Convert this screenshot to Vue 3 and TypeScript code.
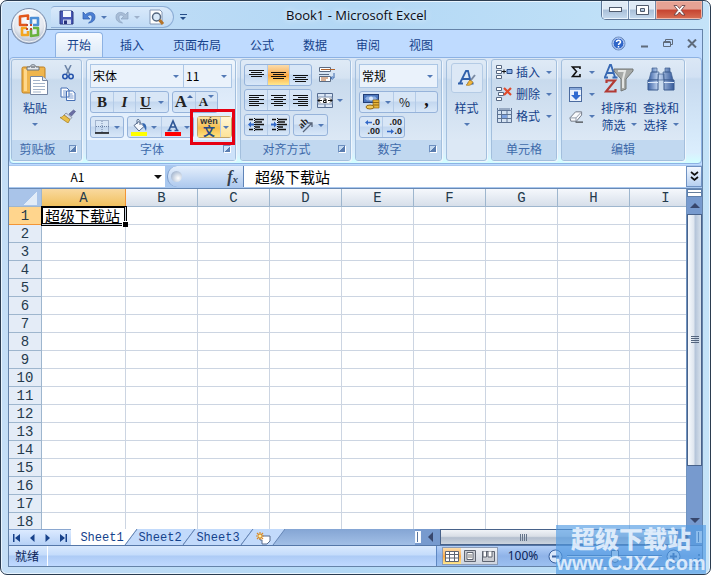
<script setup lang="ts">
import { ref } from 'vue'

interface SheetRow {
  index: number
  cells: string[]
}

const tabs = ['开始', '插入', '页面布局', '公式', '数据', '审阅', '视图']
const activeTab = ref('开始')
const columns = ['A', 'B', 'C', 'D', 'E', 'F', 'G', 'H', 'I']
const rows: SheetRow[] = Array.from({ length: 18 }, (_, r) => ({
  index: r + 1,
  cells: columns.map((_, c) => (r === 0 && c === 0 ? '超级下载站' : '')),
}))
const sheets = ['Sheet1', 'Sheet2', 'Sheet3']
const activeSheet = ref('Sheet1')
const cellName = ref('A1')
const formula = ref('超级下载站')
const zoom = ref(100)
</script>

<template>
  <div class="window">
    <header class="titlebar">
      <button class="office" aria-label="Office">
        <svg width="38" height="38" viewBox="0 0 38 38">
          <defs>
            <radialGradient id="orb" cx=".5" cy=".3" r=".75">
              <stop offset="0" stop-color="#fff" />
              <stop offset=".6" stop-color="#e3e7ee" />
              <stop offset="1" stop-color="#9aa9bf" />
            </radialGradient>
          </defs>
          <circle cx="19" cy="19" r="17.5" fill="url(#orb)" stroke="#7589a8" />
          <circle cx="19" cy="19" r="16" fill="none" stroke="#fff" stroke-opacity=".8" />
          <g fill="none" stroke-width="2.6" stroke-linejoin="round">
            <path d="M17 18H10V9.500L18 8.500V13" stroke="#e2571b" />
            <path d="M21 17v-6h7v7h-5" stroke="#4d8fd6" />
            <path d="M17 21h-5v7h6v-4" stroke="#f3a51f" />
            <path d="M21 22v7l7-1v-7h-5" stroke="#69b23d" />
          </g>
          <path d="M16 17h2v2h-2zM20 17h2v2h-2zM16 21h2v2h-2zM20 21h2v2h-2z" fill="#c34a2c" />
        </svg>
      </button>
      <div class="quick">
        <button aria-label="保存">
          <svg width="15" height="15" viewBox="0 0 15 15">
            <path d="M1 1h12l1 1v12H1z" fill="#4756b5" stroke="#2b367f" />
            <path d="M4 1h8v6H4z" fill="#f4f7ff" />
            <path d="M4 9.500h8V14H4z" fill="#cdd6f2" />
            <path d="M5 10.500h3V14H5z" fill="#27307a" />
          </svg>
        </button>
        <button aria-label="撤消">
          <svg width="14" height="14" viewBox="0 0 14 14">
            <path d="M1 2v7h7L5.500 6.500C8 4 10 5 10 7.500S9 11 6.500 13C11 12.500 13 10 13 7 13 2 7.500 1 3.500 4.500z" fill="#4c7fd4" stroke="#2d5cae" stroke-width=".7" />
          </svg>
        </button>
        <i class="caret wide"></i>
        <button aria-label="恢复" class="redo">
          <svg width="14" height="14" viewBox="0 0 14 14">
            <path d="M13 2v7H6l2.500-2.500C6 4 4 5 4 7.500S5 11 7.500 13C3 12.500 1 10 1 7 1 2 6.500 1 10.500 4.500z" fill="#a9bdd6" stroke="#8ba3c2" stroke-width=".7" />
          </svg>
        </button>
        <i class="caret pale wide"></i>
        <button aria-label="打印预览">
          <svg width="17" height="17" viewBox="0 0 17 17">
            <path d="M3 1h9l2 2v12H2V1z" fill="#fff" stroke="#8296b4" />
            <circle cx="8.500" cy="8" r="4" fill="#d9e9f8" stroke="#55677f" stroke-width="1.500" />
            <path d="M11.500 11l3.500 4" stroke="#b5742a" stroke-width="3" />
          </svg>
        </button>
      </div>
      <button class="customize" aria-label="自定义快速访问工具栏"><i class="caret"></i></button>
      <h1>Book1 - Microsoft Excel</h1>
      <div class="controls">
        <button aria-label="最小化">
          <svg width="13" height="6" viewBox="0 0 13 6"><rect x=".5" y=".5" width="12" height="4" fill="#fff" stroke="#505b6d" /></svg>
        </button>
        <button aria-label="最大化">
          <svg width="13" height="11" viewBox="0 0 13 11"><path d="M.5.500h12v9H.5zM4.500 3.500h4v3h-4z" fill="#fff" fill-rule="evenodd" stroke="#505b6d" /></svg>
        </button>
        <button class="close" aria-label="关闭">
          <svg width="13" height="11" viewBox="0 0 13 11"><path d="M1 .5h3l2.500 3 2.500-3h3L8.200 5.300 12 10H9L6.500 7 4 10H1l3.800-4.700z" fill="#fff" stroke="#5b3a40" stroke-width=".8" /></svg>
        </button>
      </div>
    </header>

    <main class="client">
      <nav class="tabs">
        <button v-for="t in tabs" :key="t" :class="{ active: t === activeTab }" @click="activeTab = t">{{ t }}</button>
        <div class="doc-controls">
          <button aria-label="帮助">
            <svg width="15" height="15" viewBox="0 0 15 15">
              <circle cx="7.500" cy="7.500" r="6.500" fill="#2f66c9" stroke="#6d8dbd" />
              <circle cx="7.500" cy="7.500" r="5.500" fill="none" stroke="#dfebff" />
              <path d="M5.500 6c0-2.500 4-2.500 4 0 0 1.300-2 1.300-2 3M7.500 10v1.500" fill="none" stroke="#fff" stroke-width="1.500" />
            </svg>
          </button>
          <button aria-label="最小化工作簿"><svg width="9" height="9" viewBox="0 0 9 9"><path d="M1 7.500h7" stroke="#5f6b7b" stroke-width="2" /></svg></button>
          <button aria-label="还原工作簿"><svg width="10" height="9" viewBox="0 0 10 9"><path d="M2.500 2V.5h7v5H8M.5 3h7v4.500h-7zM.5 3h7" fill="none" stroke="#5f6b7b" /><path d="M1 3h6" stroke="#5f6b7b" stroke-width="2" /></svg></button>
          <button aria-label="关闭工作簿"><svg width="10" height="9" viewBox="0 0 10 9"><path d="M1 .5l8 8M9 .5l-8 8" stroke="#5f6b7b" stroke-width="2" /></svg></button>
        </div>
      </nav>

      <div class="ribbon">
        <section class="group clipboard">
          <div class="body">
            <button class="large">
              <svg width="28" height="32" viewBox="0 0 28 32">
                <rect x="1" y="3" width="23" height="26" rx="1.500" fill="#efb54d" stroke="#bd7e20" />
                <path d="M3 5h3v22H3z" fill="#ffd78a" />
                <path d="M6 6V3h3c0-3 6-3 6 0h3v3z" fill="#e5e9ed" stroke="#69737f" />
                <path d="M10 3h4" stroke="#38414c" />
                <path d="M9.500 12.500h12l5 4v14h-17z" fill="#fff" stroke="#7586a2" />
                <path d="M21.500 12.500v4h5" fill="#dce6f3" stroke="#7586a2" />
                <path d="M12 16.500h7M12 19.500h12M12 22.500h12M12 25.500h12M12 28h8" stroke="#a3b3c9" />
              </svg>
              <span>粘贴</span><i class="caret"></i>
            </button>
            <div class="stack icons">
              <button aria-label="剪切">
                <svg width="14" height="15" viewBox="0 0 14 15"><path d="M4 0l4.500 9M10 0L5.500 9" stroke="#6f86a8" stroke-width="1.600" /><circle cx="4" cy="11.500" r="2.200" fill="none" stroke="#2855ac" stroke-width="1.600" /><circle cx="10" cy="11.500" r="2.200" fill="none" stroke="#2855ac" stroke-width="1.600" /></svg>
              </button>
              <button aria-label="复制">
                <svg width="16" height="14" viewBox="0 0 16 14"><path d="M1 1h6l2 2v7H1zM6.500 4h6L15 6v7.500H6.500z" fill="#fff" stroke="#456fb5" /><path d="M3 4h3M3 6h3M3 8h3M8.500 7h4M8.500 9h5M8.500 11h5" stroke="#7698cf" /></svg>
              </button>
              <button aria-label="格式刷">
                <svg width="16" height="14" viewBox="0 0 16 14"><path d="M9 5l4.500-4 2 1.500L11.500 7z" fill="#6a6fa5" stroke="#4c4f80" stroke-width=".6" /><path d="M6 4l6 4.500-2 2L4 6z" fill="#d6dbe6" stroke="#717c92" stroke-width=".7" /><path d="M4 6l6 4.500L8 14 0 8.500C2 8.500 3 7 4 6z" fill="#eabf48" stroke="#a47b1f" stroke-width=".7" /></svg>
              </button>
            </div>
          </div>
          <footer>剪贴板<i class="launcher"></i></footer>
        </section>

        <section class="group font">
          <div class="body lines">
            <div class="line combos">
              <label class="combo grow"><select aria-label="字体"><option>宋体</option></select><i class="caret"></i></label>
              <label class="combo size"><select aria-label="字号"><option>11</option></select><i class="caret"></i></label>
            </div>
            <div class="line">
              <div class="set">
                <button class="glyph"><b>B</b></button>
                <button class="glyph"><em>I</em></button>
                <button class="glyph split"><u>U</u><i class="caret"></i></button>
              </div>
              <div class="set">
                <button class="glyph grow-font">A<i class="caret up"></i></button>
                <button class="glyph shrink-font">A<i class="caret"></i></button>
              </div>
            </div>
            <div class="line">
              <div class="set">
                <button class="split" aria-label="边框">
                  <svg width="14" height="14" viewBox="0 0 14 14"><path d="M.5.500h13v12H.5zM7 1v12M1 6.500h13" fill="none" stroke="#6c83a6" stroke-dasharray="1 1" /><path d="M0 13h14" stroke="#111" stroke-width="1.500" /></svg>
                  <i class="caret"></i>
                </button>
              </div>
              <div class="set colors">
                <button class="split" aria-label="填充颜色">
                  <svg width="17" height="17" viewBox="0 0 17 17"><path d="M3 6.500l5-4 5 5-5 4.500z" fill="#f5f9fe" stroke="#53688a" /><path d="M6 5V1.500c0-2 3-1 3 1V6" fill="none" stroke="#53688a" /><path d="M11 4c4 0 5 3 4 8l-2-4z" fill="#3468b2" /><path d="M0 13h16v4H0z" fill="#ff0" /></svg>
                  <i class="caret"></i>
                </button>
                <button class="split" aria-label="字体颜色">
                  <svg width="16" height="17" viewBox="0 0 16 17"><path d="M4 11L8 2l4 9M5.500 8h5M2.500 11.500h4M9.500 11.500h4" fill="none" stroke="#2f5797" stroke-width="1.700" /><path d="M0 13h16v4H0z" fill="#f00" /></svg>
                  <i class="caret"></i>
                </button>
              </div>
              <div class="set wen">
                <button class="phonetic"><small>wén</small><span>文</span></button>
                <button class="drop" aria-label="拼音选项"><i class="caret"></i></button>
              </div>
            </div>
          </div>
          <footer>字体<i class="launcher"></i></footer>
        </section>

        <section class="group align">
          <div class="body lines">
            <div class="line">
              <div class="set">
                <button aria-label="顶端对齐"><svg width="15" height="15" viewBox="0 0 15 15"><path d="M0 2.500h15M2 4.500h11M0 6.500h15M2 8.500h11" stroke="#111" /></svg></button>
                <button class="on" aria-label="垂直居中"><svg width="15" height="15" viewBox="0 0 15 15"><path d="M0 4.500h15M2 6.500h11M0 8.500h15M2 10.500h11" stroke="#111" /></svg></button>
                <button aria-label="底端对齐"><svg width="15" height="15" viewBox="0 0 15 15"><path d="M0 7.500h15M2 9.500h11M0 11.500h15M2 13.500h11" stroke="#111" /></svg></button>
              </div>
              <button class="plain" aria-label="自动换行"><svg width="17" height="16" viewBox="0 0 17 16"><path d="M.5.500h11v4H.5zM.5 9.500h11v5H.5z" fill="#fff" stroke="#5a6b83" /><path d="M2 2.500h14M2 11h7M2 13h5" stroke="#b0622c" /><path d="M12 11h3V6M13.500 9.500l-2 1.500 2 1.500" fill="none" stroke="#3b68ae" /><path d="M0 7.500h10" stroke="#5a6b83" /></svg></button>
            </div>
            <div class="line">
              <div class="set">
                <button aria-label="文本左对齐"><svg width="15" height="13" viewBox="0 0 15 13"><path d="M0 1.500h15M0 3.500h10M0 5.500h15M0 7.500h10M0 9.500h15M0 11.500h10" stroke="#111" /></svg></button>
                <button aria-label="居中"><svg width="15" height="13" viewBox="0 0 15 13"><path d="M0 1.500h15M3 3.500h9M0 5.500h15M3 7.500h9M0 9.500h15M3 11.500h9" stroke="#111" /></svg></button>
                <button aria-label="文本右对齐"><svg width="15" height="13" viewBox="0 0 15 13"><path d="M0 1.500h15M5 3.500h10M0 5.500h15M5 7.500h10M0 9.500h15M5 11.500h10" stroke="#111" /></svg></button>
              </div>
              <button class="plain split" aria-label="合并后居中">
                <svg width="16" height="15" viewBox="0 0 16 15"><path d="M.5.500h15v14H.5zM8 1v3M8 11v3" fill="#dbe7f6" stroke="#566d91" /><path d="M1 4h14v7H1z" fill="#fff" stroke="#7b8fae" /><path d="M1 7.500h4M11 7.500h4M3 5.500l-2 2 2 2M13 5.500l2 2-2 2M6.500 6h2.500v3.500M9 7.500H6.500v2H9.500" fill="none" stroke="#111" /></svg>
                <i class="caret"></i>
              </button>
            </div>
            <div class="line">
              <div class="set">
                <button aria-label="减少缩进量"><svg width="16" height="14" viewBox="0 0 16 14"><path d="M1 1.500h4M7 1.500h9M7 4h7M7 6.500h9M7 9h5M1 11.500h4M7 11.500h8" stroke="#111" stroke-width="1.500" /><path d="M6.500 0v14" stroke="#111" stroke-dasharray="1 1" /><path d="M0 6.500l3-3v2h3v2H3v2z" fill="#3268c8" /></svg></button>
                <button aria-label="增加缩进量"><svg width="16" height="14" viewBox="0 0 16 14"><path d="M1 1.500h4M7 1.500h9M7 4h7M7 6.500h9M7 9h5M1 11.500h4M7 11.500h8" stroke="#111" stroke-width="1.500" /><path d="M6.500 0v14" stroke="#111" stroke-dasharray="1 1" /><path d="M6 6.500l-3-3v2H0v2h3v2z" fill="#3268c8" /></svg></button>
              </div>
              <div class="set">
                <button class="split" aria-label="方向">
                  <svg width="16" height="16" viewBox="0 0 16 16"><path d="M6 15L15 6M15 10V6h-4" fill="none" stroke="#58657a" stroke-width="1.300" /><text x="2" y="10" font-size="10" font-weight="bold" font-family="Liberation Serif, serif" transform="rotate(-43 6 8)" fill="#222">ab</text></svg>
                  <i class="caret"></i>
                </button>
              </div>
            </div>
          </div>
          <footer>对齐方式<i class="launcher"></i></footer>
        </section>

        <section class="group number">
          <div class="body lines">
            <div class="line combos"><label class="combo grow"><select aria-label="数字格式"><option>常规</option></select><i class="caret"></i></label></div>
            <div class="line">
              <div class="set fill">
                <button class="split" aria-label="会计数字格式">
                  <svg width="17" height="16" viewBox="0 0 17 16"><rect x=".5" y=".5" width="15" height="8" fill="#4c77bd" stroke="#233f77" /><path d="M2 4.500l2-2h8l2 2-2 2H4z" fill="#8eb0e4" /><circle cx="8" cy="4.500" r="2" fill="#d9e7fb" /><path d="M10 6h6v8h-6z" fill="#e7b53b" stroke="#926815" stroke-width=".7" /><path d="M10 8.500h6M10 11h6" stroke="#926815" /><ellipse cx="7" cy="13" rx="4" ry="2" fill="#f1ca59" stroke="#926815" /></svg>
                  <i class="caret"></i>
                </button>
                <button class="percent">%</button>
                <button class="comma">,</button>
              </div>
            </div>
            <div class="line">
              <div class="set">
                <button class="decimal" aria-label="增加小数位数">
                  <span><svg width="7" height="5" viewBox="0 0 7 5"><path d="M0 2.500L3 0v1.800h4v1.400H3V5z" fill="#3268c8" /></svg>.0</span>
                  <span>.00</span>
                </button>
                <button class="decimal" aria-label="减少小数位数">
                  <span>.00</span>
                  <span><svg width="7" height="5" viewBox="0 0 7 5"><path d="M7 2.500L4 0v1.800H0v1.400h4V5z" fill="#3268c8" /></svg>.0</span>
                </button>
              </div>
            </div>
          </div>
          <footer>数字<i class="launcher"></i></footer>
        </section>

        <section class="group styles">
          <button class="large">
            <span class="tile">
              <svg width="20" height="20" viewBox="0 0 20 20"><path d="M3 15L9 3h2l3 12M5.500 11H13M1 15.500h5M10.500 15.500h6" fill="none" stroke="#2f5faa" stroke-width="1.800" /><path d="M18 7l-4 5" stroke="#7a8aa3" stroke-width="2" /><path d="M9 17c2 0 2-4 4-5l3 2c-1 3-4 4-7 3z" fill="#f1b63d" stroke="#9c6e17" stroke-width=".6" /></svg>
            </span>
            <span>样式</span><i class="caret"></i>
          </button>
        </section>

        <section class="group cells">
          <div class="body">
            <div class="stack">
              <button class="row-btn">
                <svg width="17" height="15" viewBox="0 0 17 15"><path d="M.5.500h5v3h-5zM.5 10.500h5v3h-5zM.5 5.500h5v3h-5z" fill="#fff" stroke="#586983" /><path d="M11 4.500h5v4h-5z" fill="#8db1e7" stroke="#274b86" /><path d="M6 6.500h4M8 4.500v4" stroke="#111" /></svg>
                插入<i class="caret"></i>
              </button>
              <button class="row-btn">
                <svg width="17" height="15" viewBox="0 0 17 15"><path d="M.5.500h5v3h-5zM.5 10.500h5v3h-5zM2.500 5.500h5v3h-5z" fill="#fff" stroke="#586983" /><path d="M8 1l7 7M15 1L8 8" stroke="#e04a2b" stroke-width="2.200" /></svg>
                删除<i class="caret"></i>
              </button>
              <button class="row-btn">
                <svg width="17" height="16" viewBox="0 0 17 16"><path d="M1.500 2.500h14v12h-14zM1 6.500h15M1 10.500h15M5.500 2v13M11 2v13M1.500 0v2M15.500 0v2M3 1h11" fill="none" stroke="#5d7394" /><path d="M6 7h5v3H6z" fill="#7ea3df" /></svg>
                格式<i class="caret"></i>
              </button>
            </div>
          </div>
          <footer>单元格</footer>
        </section>

        <section class="group editing">
          <div class="body">
            <div class="stack small">
              <button class="row-btn" aria-label="求和"><svg width="14" height="14" viewBox="0 0 14 14"><path d="M11 4V2H3.500L7.500 6.500l-4 5H11V9" fill="none" stroke="#111" stroke-width="1.600" /></svg><i class="caret"></i></button>
              <button class="row-btn" aria-label="填充"><svg width="14" height="15" viewBox="0 0 14 15"><rect x=".5" y=".5" width="12" height="14" fill="#e9f1fc" stroke="#4b6b9f" /><path d="M1 1h11v2H1z" fill="#89a9da" /><path d="M5 4.500h4V8h3l-5 5-5-5h3z" fill="#2f6ad0" /></svg><i class="caret"></i></button>
              <button class="row-btn" aria-label="清除"><svg width="14" height="13" viewBox="0 0 15 13"><path d="M1 8l6-6.500h6.500V5L8 11.500H2z" fill="#f9fafc" stroke="#6c7482" /><path d="M1 8h6.500L13 2M7.500 8v3.500" fill="none" stroke="#8d97a7" /><path d="M7 12.500h8" stroke="#111" /></svg><i class="caret"></i></button>
            </div>
            <button class="large">
              <svg width="30" height="30" viewBox="0 0 30 30"><path d="M10 5h19v2l-7 8v10l-5 2V15L10 7z" fill="#a6a9a7" stroke="#727674" /><path d="M14 7h7l-2 8v9" fill="none" stroke="#e3e5e3" stroke-width="2" /><path d="M1 13L6 1h1l4 12M3 9h7M0 13.500h4M8.500 13.500h5" fill="none" stroke="#3869b4" stroke-width="1.900" /><path d="M2.500 19v-2.500H11L2 27.500h9.500V25" fill="none" stroke="#b23a35" stroke-width="2.200" /></svg>
              <span>排序和</span><span>筛选<i class="caret"></i></span>
            </button>
            <button class="large">
              <svg width="28" height="30" viewBox="0 0 28 30"><defs><linearGradient id="lens" x1="0" x2="1"><stop offset="0" stop-color="#3d64a6" /><stop offset=".4" stop-color="#c9dbf5" /><stop offset="1" stop-color="#355a9a" /></linearGradient></defs><path d="M5 4h5v4H5zM18 4h5v4h-5zM4 8h8l-1 8H2zM16 8h8l2 8h-9zM11 10h6v6h-6z" fill="url(#lens)" stroke="#41608f" stroke-width=".7" /><path d="M1 16h10v10H1zM17 16h10v10H17z" fill="url(#lens)" stroke="#3b5a8e" /><path d="M1 18.500h10M17 18.500h10" stroke="#dce9fa" /></svg>
              <span>查找和</span><span>选择<i class="caret"></i></span>
            </button>
          </div>
          <footer>编辑</footer>
        </section>
      </div>

      <div class="formula-bar">
        <div class="name-box"><input v-model="cellName" aria-label="名称框" /><i class="caret black"></i></div>
        <div class="fx"><i class="knob"></i><button aria-label="插入函数"><em>f</em><small>x</small></button></div>
        <input v-model="formula" class="formula" aria-label="编辑栏" />
        <button class="expand" aria-label="展开编辑栏"><svg width="9" height="11" viewBox="0 0 9 11"><path d="M1 1l3.500 3L8 1M1 6l3.500 3L8 6" fill="none" stroke="#111" stroke-width="1.700" /></svg></button>
      </div>

      <div class="workspace">
        <div class="sheet">
          <table>
            <colgroup>
              <col class="c-head" />
              <col v-for="c in columns" :key="c" :class="c === 'A' ? 'c-first' : 'c-rest'" />
            </colgroup>
            <thead>
              <tr>
                <th class="corner"></th>
                <th v-for="c in columns" :key="c" :class="{ sel: c === 'A' }">{{ c }}</th>
              </tr>
            </thead>
            <tbody>
              <tr v-for="row in rows" :key="row.index">
                <th :class="{ sel: row.index === 1 }">{{ row.index }}</th>
                <td v-for="(cell, i) in row.cells" :key="i" :class="{ cursor: row.index === 1 && i === 0 }">{{ cell }}</td>
              </tr>
            </tbody>
          </table>
        </div>
        <div class="vscroll">
          <i class="splitter"></i>
          <button class="arrow" aria-label="向上滚动"><i class="tri up"></i></button>
          <div class="v-thumb"><i></i></div>
          <div class="v-track"></div>
          <button class="arrow" aria-label="向下滚动"><i class="tri"></i></button>
        </div>
      </div>

      <div class="sheet-bar">
        <div class="sheet-nav">
          <button aria-label="第一张"><svg width="7" height="8" viewBox="0 0 7 8"><path d="M0 0h1.500v8H0zM7 0v8L2 4z" fill="#17418a" /></svg></button>
          <button aria-label="上一张"><svg width="7" height="8" viewBox="0 0 7 8"><path d="M5.500 0v8L1 4z" fill="#17418a" /></svg></button>
          <button aria-label="下一张"><svg width="7" height="8" viewBox="0 0 7 8"><path d="M1.500 0v8L6 4z" fill="#17418a" /></svg></button>
          <button aria-label="最后一张"><svg width="7" height="8" viewBox="0 0 7 8"><path d="M5.500 0H7v8H5.500zM0 0v8l5-4z" fill="#17418a" /></svg></button>
        </div>
        <div class="sheet-tabs">
          <button v-for="(s, i) in sheets" :key="s" class="sheet-tab" :class="{ active: s === activeSheet }" @click="activeSheet = s">
            <svg class="skin" viewBox="0 0 70 16" preserveAspectRatio="none">
              <path class="face" :d="i === 0 ? 'M4 16V0H70L58 16z' : 'M0 16L12 0H70L58 16z'" />
              <path class="edge" :d="i === 0 ? 'M58 16L70 0' : 'M0 16L12 0M58 16L70 0'" />
            </svg>
            <span>{{ s }}</span>
          </button>
          <button class="sheet-tab add" aria-label="插入工作表">
            <svg class="skin" viewBox="0 0 44 16" preserveAspectRatio="none"><path class="face" d="M0 16L12 0H44L32 16z" /><path class="edge" d="M0 16L12 0M32 16L44 0" /></svg>
            <svg width="15" height="13" viewBox="0 0 15 13"><path d="M4 4h10v5l-3 3H6V8H4z" fill="#fff" stroke="#566b8e" /><path d="M4 0v8M0 4h8M1 1l6 6M7 1L1 7" stroke="#dc8a22" stroke-width="1.200" /><circle cx="4" cy="4" r="1.500" fill="#fff3a8" /></svg>
          </button>
        </div>
        <div class="hscroll">
          <i class="h-splitter"></i>
          <button class="h-arrow" aria-label="向左滚动"><i class="tri left"></i></button>
          <div class="h-thumb"><i></i></div>
          <button class="h-arrow" aria-label="向右滚动"><i class="tri right"></i></button>
          <i class="h-splitter"></i>
        </div>
      </div>

      <div class="status">
        <span class="ready">就绪</span>
        <div class="view-area">
          <div class="views">
            <button class="on" aria-label="普通"><svg width="14" height="11" viewBox="0 0 14 11"><path d="M.5.500h13v10H.5zM1 3.500h12M1 7h12M4.500 1v9M9.500 1v9" fill="#fff" stroke="#5e6470" /></svg></button>
            <button aria-label="页面布局"><svg width="12" height="12" viewBox="0 0 12 12"><path d="M.5.500h11v11H.5z" fill="#c9ccd2" stroke="#5e6470" /><path d="M3 2.500h6v7H3z" fill="#fff" stroke="#5e6470" /><path d="M4 5h4M4 7h4" stroke="#777" /></svg></button>
            <button aria-label="分页预览"><svg width="13" height="11" viewBox="0 0 13 11"><path d="M.5.500h12v10H.5z" fill="#c9ccd2" stroke="#5e6470" /><path d="M1 0h3.500v6H1zM6 0h4v6H6z" fill="#fff" stroke="#5e6470" /></svg></button>
          </div>
          <button class="pct">{{ zoom }}%</button>
          <button class="round" aria-label="缩小"><svg width="15" height="15" viewBox="0 0 15 15"><circle cx="7.500" cy="7.500" r="6.500" fill="#d9e7fa" stroke="#375f9d" /><path d="M4 7.500h7" stroke="#375f9d" stroke-width="2" /></svg></button>
          <input v-model.number="zoom" class="slider" type="range" min="10" max="190" aria-label="显示比例" />
          <button class="round" aria-label="放大"><svg width="15" height="15" viewBox="0 0 15 15"><circle cx="7.500" cy="7.500" r="6.500" fill="#d9e7fa" stroke="#375f9d" /><path d="M4 7.500h7M7.500 4v7" stroke="#375f9d" stroke-width="2" /></svg></button>
          <svg class="grip" width="10" height="10" viewBox="0 0 10 10"><path d="M8 0h2v2H8zM8 4h2v2H8zM4 4h2v2H4zM8 8h2v2H8zM4 8h2v2H4zM0 8h2v2H0z" fill="#4572ad" /></svg>
        </div>
      </div>
    </main>

    <aside class="watermark"><strong>超级下载站</strong><span>www.CJXZ.com</span></aside>
  </div>
</template>

<style>
body {
  margin: 0;
  background: #fff;
}
</style>

<style scoped>
* {
  box-sizing: border-box;
}
.window {
  position: relative;
  display: flex;
  flex-direction: column;
  height: 100vh;
  padding: 0 7px 7px;
  border: 1px solid #2b3c50;
  border-radius: 7px;
  overflow: hidden;
  background: linear-gradient(90deg, #c4def6, #b3d8f5 50%, #c4e3f8);
  box-shadow: inset 0 0 0 1px #e9f5ff;
  color: #15428b;
  font: 12px/16px "Noto Sans CJK SC", sans-serif;
}
button {
  display: flex;
  align-items: center;
  justify-content: center;
  padding: 0;
  border: 0;
  background: none;
  color: inherit;
  font: inherit;
}
svg {
  display: block;
  flex: none;
}
.caret {
  flex: none;
  width: 0;
  height: 0;
  border: 3px solid transparent;
  border-top-color: #5279b5;
  border-bottom-width: 0;
}
.caret.up {
  border-top-width: 0;
  border-bottom: 3px solid #3c64a2;
}
.caret.pale {
  border-top-color: #9eb1cb;
}
.caret.black {
  border-width: 4px 4px 0;
  border-top-color: #111;
}

/* Title bar */
.titlebar {
  position: relative;
  display: flex;
  flex: none;
  align-items: flex-start;
  height: 28px;
  padding-left: 43px;
}
.office {
  position: absolute;
  z-index: 2;
  top: 6px;
  left: 2px;
}
.quick {
  display: flex;
  align-items: center;
  gap: 5px;
  height: 22px;
  margin-top: 5px;
  padding: 0 8px;
  border: 1px solid #8daed6;
  border-left: 0;
  border-radius: 4px 12px 12px 0;
  background: linear-gradient(#d9e9fa, #c0dbf6);
}
.quick button:nth-child(2) {
  margin-left: 3px;
}
.quick .redo {
  margin-left: 3px;
}
.quick .wide + button:last-child {
  margin-left: 3px;
}
.customize {
  width: 10px;
  height: 9px;
  margin: 11px 0 0 4px;
}
.customize .caret {
  width: 7px;
  height: 6px;
  border: 0;
  background: linear-gradient(#254d88 1px, transparent 1px);
  position: relative;
}
.customize .caret::after {
  content: "";
  position: absolute;
  top: 3px;
  left: 0;
  border: 3px solid transparent;
  border-top-color: #254d88;
  border-bottom: 0;
}
h1 {
  flex: 1;
  margin: 5px 0 0;
  padding-left: 98px;
  color: #0b0b14;
  font: 13px/18px "Open Sans", sans-serif;
  text-shadow: 0 0 6px #fff;
  white-space: nowrap;
}
.controls {
  display: flex;
  height: 19px;
  border: 1px solid #5d7595;
  border-top: 0;
  border-radius: 0 0 5px 5px;
  overflow: hidden;
}
.controls button {
  width: 27px;
  border-right: 1px solid #7189a9;
  background: linear-gradient(#dfeaf5 45%, #a9bfd8 50%, #c7dbef);
  box-shadow: inset 0 0 0 1px #eaf4fd;
}
.controls .close {
  width: 46px;
  border: 0;
  background: linear-gradient(#e6a294 45%, #c64330 50%, #d87055);
  box-shadow: inset 0 0 0 1px #f0b8aa;
}

/* Client area */
.client {
  display: flex;
  flex: 1;
  flex-direction: column;
  min-height: 0;
  border: 1px solid #6583a8;
  background: #bfdbff;
}
.tabs {
  display: flex;
  flex: none;
  align-items: flex-end;
  gap: 5px;
  height: 27px;
  padding: 0 5px 0 46px;
}
.tabs > button {
  height: 25px;
  padding: 0 11px 1px;
  border: 1px solid transparent;
  border-bottom: 0;
  white-space: nowrap;
}
.tabs > .active {
  border-color: #8db2e3;
  border-radius: 4px 4px 0 0;
  background: linear-gradient(#f6faff, #dce9f7);
}
.doc-controls {
  display: flex;
  align-items: center;
  align-self: center;
  gap: 14px;
  margin-left: auto;
}
.ribbon {
  display: flex;
  flex: none;
  gap: 4px;
  height: 107px;
  padding: 1px 1px 2px;
  border: 1px solid #8db2e3;
  border-radius: 4px;
  background: linear-gradient(#dbe7f5 0, #d2e1f3 18%, #c7daef 20%, #dbeefd 90%, #d2ffff);
}
.group {
  display: flex;
  flex: none;
  flex-direction: column;
  border: 1px solid #a3bfdd;
  border-radius: 3px;
  overflow: hidden;
  background: linear-gradient(#dfeaf6 0, #d5e3f2 18%, #c8daed 20%, #dce8f5 80%);
  box-shadow: 1px 1px #eff6fd;
}
.clipboard { width: 71px; }
.font { width: 150px; }
.align { width: 111px; }
.number { width: 87px; }
.styles { width: 41px; }
.cells { width: 66px; }
.editing { width: 124px; }
.group.font {
  overflow: visible;
  background: linear-gradient(#eef5fc 0, #e4eefa 18%, #d9e7f7 20%, #eaf4ff 80%);
}
.group .body {
  display: flex;
  flex: 1;
  min-height: 0;
}
.group footer {
  position: relative;
  height: 20px;
  background: #c1d8f0;
  color: #3e6aaa;
  line-height: 18px;
  text-align: center;
}
.clipboard footer,
.align footer,
.number footer {
  padding-right: 18px;
}
.font footer {
  padding-right: 18px;
  background: #cde2fa;
}
.launcher {
  position: absolute;
  top: 5px;
  right: 4px;
  width: 8px;
  height: 8px;
  border: 1px solid #6d8fbf;
  border-right-color: #fff;
  border-bottom-color: #fff;
  background: linear-gradient(135deg, transparent 50%, #5a7db0 50%);
}
.large {
  display: flex;
  flex-direction: column;
  justify-content: flex-start;
  line-height: 17px;
}
.large .caret {
  margin-top: 7px;
}
.large span {
  display: flex;
  align-items: center;
  gap: 5px;
}
.large span .caret {
  margin: 0;
}
.clipboard .large {
  width: 46px;
  padding-top: 4px;
}
.clipboard .large span {
  margin-top: 3px;
}
.stack {
  display: flex;
  flex-direction: column;
  padding-top: 1px;
}
.stack button {
  height: 22px;
}
.icons {
  width: 20px;
}
.lines {
  flex-direction: column;
  gap: 3px;
  padding: 4px 3px 0;
}
.line {
  display: flex;
  gap: 3px;
  height: 22px;
}
.combos {
  gap: 0;
  height: 24px;
}
.combo {
  position: relative;
  display: flex;
  align-items: center;
  border: 1px solid #abc6e5;
  background: #eaf2fb;
}
.combo.grow {
  flex: 1;
}
.combo.size {
  width: 48px;
  border-left: 0;
}
.combo select {
  width: 100%;
  height: 100%;
  padding: 0 2px;
  border: 0;
  appearance: none;
  background: none;
  color: #000;
  font: inherit;
}
.combo .caret {
  position: absolute;
  right: 4px;
}
.set {
  display: flex;
  border: 1px solid #96b3da;
  border-radius: 3px;
  overflow: hidden;
  background: linear-gradient(#d8e6f6 45%, #c3d7ef 50%, #d8e7f8);
}
.set button {
  width: 22px;
  border-left: 1px solid #b4cbe7;
}
.set button:first-child {
  border-left: 0;
}
.set .split {
  gap: 5px;
  width: 33px;
}
.glyph {
  color: #222;
}
.set .glyph {
  font: bold 15px/20px "Liberation Serif", serif;
}
.set .glyph.split {
  gap: 7px;
}
.set .grow-font {
  align-items: flex-start;
  font-size: 17px;
}
.set .shrink-font {
  align-items: flex-start;
  font-size: 13px;
}
.grow-font .caret,
.shrink-font .caret {
  margin-top: 3px;
}
.colors .split {
  gap: 3px;
}
.set.wen {
  position: relative;
  z-index: 2;
  overflow: visible;
  border-color: #c2a469;
}
.wen::after {
  content: "";
  position: absolute;
  inset: -8px -4px -8px -8px;
  border: 3px solid #e60012;
  pointer-events: none;
}
.wen button {
  background: linear-gradient(#fbe3a3, #f5bd4e 55%, #ffe27d);
}
.wen .drop {
  width: 11px;
  background: linear-gradient(#fff6d5, #fde398);
}
.wen .phonetic {
  flex-direction: column;
  color: #333;
}
.phonetic small {
  height: 8px;
  font: bold 9px/8px "Liberation Sans", sans-serif;
}
.phonetic span {
  height: 12px;
  color: #264a86;
  font-size: 12px;
  font-weight: bold;
  line-height: 12px;
}
.on {
  background: linear-gradient(#fbdcab, #fab25a 45%, #fda63c 50%, #ffe88e);
}
.align .plain {
  width: 24px;
}
.align .plain.split {
  gap: 4px;
  width: 30px;
}
.set.fill {
  flex: 1;
}
.set.fill button {
  flex: 1;
}
.set.fill .split {
  flex: none;
}
.percent {
  color: #222;
}
.set .comma {
  padding-bottom: 4px;
  color: #111;
  font: bold 18px/16px "Liberation Serif", serif;
}
.decimal {
  flex-direction: column;
  align-items: flex-end;
}
.set .decimal {
  padding-right: 2px;
}
.decimal span {
  display: flex;
  align-items: center;
  height: 9px;
  color: #222;
  font: bold 9px/9px "Liberation Sans", sans-serif;
}
.styles .large {
  padding-top: 3px;
}
.styles .large .tile {
  justify-content: center;
  width: 32px;
  height: 30px;
  border: 1px solid #b4cbe5;
  border-radius: 3px;
  background: #dce8f6;
}
.styles .large .tile + span {
  margin-top: 6px;
}
.cells .stack {
  flex: 1;
}
.row-btn {
  gap: 3px;
}
.row-btn .caret {
  margin-left: 3px;
}
.editing .small {
  width: 36px;
  padding-left: 3px;
}
.editing .large {
  width: 42px;
  padding-top: 4px;
}
.editing .large span {
  white-space: nowrap;
}
.editing .large svg + span {
  margin-top: 5px;
}

/* Formula bar */
.formula-bar {
  display: flex;
  flex: none;
  height: 23px;
  padding: 1px 0;
  margin-top: 1px;
  background: #a9c8ef;
}
.formula-bar input {
  min-width: 0;
  padding: 0;
  border: 0;
  background: #fff;
  color: #000;
  font: inherit;
}
.name-box {
  display: flex;
  align-items: center;
  width: 156px;
  padding-right: 3px;
  background: #fff;
}
.name-box input {
  flex: 1;
  padding-right: 8px;
  text-align: center;
}
.fx {
  display: flex;
  align-items: center;
  justify-content: space-between;
  width: 77px;
  padding: 0 5px 0 3px;
  margin-left: 2px;
  border-right: 1px solid #5f84b8;
  border-left: 1px solid #7c9cc9;
  border-radius: 10px 0 0 10px;
  background: linear-gradient(#e4effc, #aec9ee);
}
.knob {
  width: 11px;
  height: 11px;
  border-radius: 50%;
  background: radial-gradient(circle at 65% 65%, #fff, #8ba2c2);
}
.fx button {
  color: #333d4d;
  font: bold 16px/18px "Liberation Serif", serif;
}
.fx small {
  padding-top: 5px;
  font-size: 11px;
  font-style: italic;
}
.formula-bar .formula {
  flex: 1;
  padding-left: 11px;
  font-size: 15px;
}
.expand {
  width: 16px;
  border: 1px solid #6f92c3;
  background: linear-gradient(#f2f8ff, #b6cff0);
}

/* Grid */
.workspace {
  display: flex;
  flex: 1;
  min-height: 0;
  border-top: 1px solid #6889b5;
}
.sheet {
  flex: 1;
  min-width: 0;
  overflow: hidden;
  background: #fff;
}
table {
  width: 693px;
  table-layout: fixed;
  border-collapse: separate;
  border-spacing: 0;
}
.c-head { width: 33px; }
.c-first { width: 84px; }
.c-rest { width: 72px; }
th,
td {
  height: 18px;
  padding: 0;
  border-right: 1px solid #ccd5e2;
  border-bottom: 1px solid #ccd5e2;
  line-height: 17px;
}
th {
  padding-top: 2px;
  border-color: #9eb6ce;
  background: #e4ecf7;
  color: #243a4c;
  font: 14px/15px "Liberation Mono", monospace;
}
thead th {
  background: linear-gradient(#f5f8fc, #d7dfea);
}
th.sel {
  border-color: #f29536;
  background: #ffd58d;
}
thead th.sel {
  background: linear-gradient(#f9d99f, #f1c15f);
}
thead .corner {
  background: linear-gradient(135deg, transparent 65%, #e2ecf8 65%) center / 24px 14px no-repeat, #a9c4e9;
}
td {
  color: #000;
  font-size: 15px;
}
.cursor {
  position: relative;
  padding-left: 3px;
  line-height: 15px;
  white-space: nowrap;
  box-shadow: inset 0 0 0 1px #000, 0 0 0 1px #000;
}
.cursor::after {
  content: "";
  position: absolute;
  right: -3px;
  bottom: -3px;
  width: 5px;
  height: 5px;
  border: solid #fff;
  border-width: 1px 0 0 1px;
  background: #000;
}
.vscroll {
  display: flex;
  flex-direction: column;
  width: 16px;
  background: #779ace;
  border-left: 1px solid #7093c0;
}
.splitter {
  height: 8px;
  border: 1px solid #5f80ac;
  background: linear-gradient(#fff 2px, #667f9c 2px 3px, #fff 3px);
}
.arrow {
  height: 17px;
}
.tri {
  border: 5px solid transparent;
  border-top-color: #38476d;
  border-bottom: 0;
}
.tri.up {
  border-top: 0;
  border-bottom: 5px solid #38476d;
}
.v-thumb {
  display: flex;
  flex: 253;
  align-items: center;
  justify-content: center;
  border: 1px solid #48628a;
  background: linear-gradient(90deg, #f7fafd, #dfe6ef 45%, #b4c4d9 55%, #d7e1ec);
}
.v-thumb i {
  width: 8px;
  height: 8px;
  background: repeating-linear-gradient(#53647d 0 1px, transparent 1px 2px);
}
.v-track {
  flex: 46;
}

/* Sheet tabs and horizontal scroll bar */
.sheet-bar {
  display: flex;
  flex: none;
  height: 17px;
  border-bottom: 1px solid #5577a8;
  background: linear-gradient(#84a5d4, #a2bfe6);
}
.sheet-nav {
  display: flex;
  align-items: center;
  justify-content: space-around;
  width: 62px;
  border-top: 1px solid #8aa7d0;
  background: linear-gradient(#dceaff, #b6d1f6);
}
.sheet-tabs {
  display: flex;
  margin-left: -4px;
}
.sheet-tab {
  position: relative;
  width: 70px;
  margin-right: -12px;
  padding-top: 2px;
  font: 12px/14px "Liberation Mono", monospace;
}
.sheet-tab.active {
  z-index: 1;
}
.sheet-tab > :not(.skin) {
  position: relative;
}
.sheet-tab.add {
  width: 44px;
}
.skin {
  position: absolute;
  inset: 0;
  width: 100%;
  height: 100%;
}
.face {
  fill: #c2dafb;
}
.edge {
  fill: none;
  stroke: #6585b4;
}
.active .face {
  fill: #fff;
}
.hscroll {
  display: flex;
  width: 287px;
  margin-left: auto;
  background: #779ace;
}
.h-splitter {
  width: 6px;
  margin: 2px 0;
  border: 1px solid #f4f9ff;
  background: linear-gradient(90deg, #fff 1px, #57749e 1px 2px, #fff 2px);
}
.h-arrow {
  width: 19px;
}
.tri.left {
  border: 5px solid transparent;
  border-right-color: #38476d;
  border-left: 0;
}
.tri.right {
  border: 5px solid transparent;
  border-right: 0;
  border-left-color: #38476d;
}
.h-thumb {
  display: flex;
  flex: 1;
  align-items: center;
  justify-content: center;
  padding-right: 70px;
  border: 1px solid #48628a;
  background: linear-gradient(#f0f3f7, #d9dee6 45%, #b3bece 55%, #cdd5df);
}
.h-thumb i {
  width: 8px;
  height: 7px;
  background: repeating-linear-gradient(90deg, #64748a 0 1px, transparent 1px 2px);
}

/* Status bar */
.status {
  display: flex;
  flex: none;
  height: 20px;
  background: linear-gradient(#dae9fd, #c4dcfb 45%, #adcbf5 50%, #c0daff);
}
.ready {
  width: 39px;
  padding-left: 6px;
  border-right: 1px solid #fff;
  color: #0b2458;
  line-height: 20px;
}
.view-area {
  display: flex;
  align-items: center;
  width: 266px;
  padding-left: 5px;
  margin-left: auto;
  border-left: 1px solid #5e87c2;
  background: linear-gradient(#b3cff7, #8fb3e8 50%, #9cc0f0);
}
.views {
  display: flex;
  height: 18px;
  border: 1px solid #8b9bb5;
  background: linear-gradient(#eceff4, #ced5df);
}
.views button {
  width: 18px;
}
.pct {
  width: 50px;
  color: #0b2458;
  font: 12px/16px "Noto Sans", sans-serif;
}
.round {
  width: 15px;
}
.slider {
  flex: 1;
  min-width: 0;
  height: 16px;
  margin: 0 4px;
  appearance: none;
  background: linear-gradient(transparent 7px, #476fa9 7px 8px, #fff 8px 9px, transparent 9px);
}
.slider::-webkit-slider-thumb {
  width: 8px;
  height: 13px;
  appearance: none;
  border: 1px solid #41608c;
  border-radius: 1px 1px 4px 4px;
  background: #e7eff9;
}
.grip {
  align-self: flex-end;
  margin: 0 2px 2px 9px;
}
.watermark {
  position: absolute;
  z-index: 5;
  right: 4px;
  bottom: -1px;
  display: flex;
  flex-direction: column;
  align-items: center;
  width: 150px;
  height: 50px;
  background: rgba(82, 155, 228, 0.65);
  color: rgba(238, 246, 255, 0.85);
  pointer-events: none;
}
.watermark strong {
  font-size: 24px;
  font-weight: 900;
  line-height: 26px;
}
.watermark span {
  font: bold 20px/24px "Liberation Sans", sans-serif;
}
</style>
